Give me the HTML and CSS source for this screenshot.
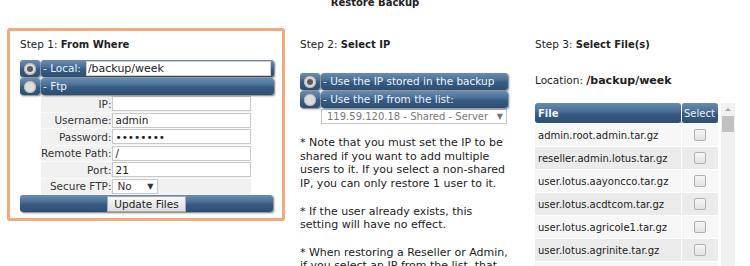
FILE: index.html
```html
<!DOCTYPE html>
<html lang="en">
<head>
<meta charset="UTF-8">
<title>Restore Backup</title>
<link rel="stylesheet" href="styles.css">
</head>
<body>

<h1 class="page-title">Restore Backup</h1>

<div class="restore">
    <!-- Step 1 -->
    <div class="step step-one">
        <h2 class="step-title">Step 1: <b>From Where</b></h2>

        <div class="radio-row">
            <span class="radio-cell"><span class="radio checked"></span></span>
            <span class="bar">- Local: <input class="local-path" type="text" value="/backup/week"></span>
        </div>
        <div class="radio-row">
            <span class="radio-cell"><span class="radio"></span></span>
            <span class="bar">- Ftp</span>
        </div>

        <table class="ftp-fields">
            <tr><td class="label">IP:</td><td><input type="text" value=""></td></tr>
            <tr><td class="label">Username:</td><td><input type="text" value="admin"></td></tr>
            <tr><td class="label">Password:</td><td><input type="password" value="password"></td></tr>
            <tr><td class="label">Remote Path:</td><td><input type="text" value="/"></td></tr>
            <tr><td class="label">Port:</td><td><input type="text" value="21"></td></tr>
            <tr><td class="label">Secure FTP:</td><td><span class="fake-select small">No <i>&#9660;</i></span></td></tr>
        </table>

        <div class="bar bar-center">
            <button class="btn" type="button">Update Files</button>
        </div>
    </div>

    <!-- Step 2 -->
    <div class="step step-two">
        <h2 class="step-title">Step 2: <b>Select IP</b></h2>

        <div class="ip-options">
            <div class="radio-row">
                <span class="radio-cell"><span class="radio checked"></span></span>
                <span class="bar">- Use the IP stored in the backup</span>
            </div>
            <div class="radio-row">
                <span class="radio-cell"><span class="radio"></span></span>
                <span class="bar">- Use the IP from the list:</span>
            </div>
            <span class="fake-select ip-select"><span>119.59.120.18 - Shared - Server</span> <i>&#9660;</i></span>
        </div>

        <p class="note">
            * Note that you must set the IP to be shared if you want to add multiple users to it. If you select a non-shared IP, you can only restore 1 user to it.<br><br>
            * If the user already exists, this setting will have no effect.<br><br>
            * When restoring a Reseller or Admin, if you select an IP from the list, that IP will be used for all of its users.
        </p>
    </div>

    <!-- Step 3 -->
    <div class="step step-three">
        <h2 class="step-title">Step 3: <b>Select File(s)</b></h2>

        <p class="location">Location: <b>/backup/week</b></p>

        <div class="file-scroll">
            <div class="file-list">
                <table class="files">
                    <thead>
                        <tr><th class="col-file">File</th><th class="col-select">Select</th></tr>
                    </thead>
                    <tbody>
                        <tr><td>admin.root.admin.tar.gz</td><td class="check"><input type="checkbox"></td></tr>
                        <tr><td>reseller.admin.lotus.tar.gz</td><td class="check"><input type="checkbox"></td></tr>
                        <tr><td>user.lotus.aayoncco.tar.gz</td><td class="check"><input type="checkbox"></td></tr>
                        <tr><td>user.lotus.acdtcom.tar.gz</td><td class="check"><input type="checkbox"></td></tr>
                        <tr><td>user.lotus.agricole1.tar.gz</td><td class="check"><input type="checkbox"></td></tr>
                        <tr><td>user.lotus.agrinite.tar.gz</td><td class="check"><input type="checkbox"></td></tr>
                        <tr><td>user.lotus.anantara.tar.gz</td><td class="check"><input type="checkbox"></td></tr>
                        <tr><td>user.lotus.asiatech.tar.gz</td><td class="check"><input type="checkbox"></td></tr>
                    </tbody>
                </table>
            </div>
            <div class="scrollbar">
                <span class="scroll-arrow"></span>
                <span class="scroll-thumb"></span>
            </div>
        </div>
    </div>
</div>

</body>
</html>
```

FILE: styles.css
```css
/* base */
body {
    margin: 0;
    font-family: "DejaVu Sans", Verdana, sans-serif;
    font-size: 10.5px;
    color: #222;
    background: #fff;
}

.page-title {
    margin: -4px 0 0;
    font-size: 10px;
    line-height: 14px;
    text-align: center;
}

.restore {
    display: flex;
    align-items: flex-start;
    margin-top: 18px;
    padding-left: 7px;
}

.step-title {
    margin: 0;
    font-size: 10.5px;
    font-weight: normal;
    line-height: 14px;
}
.step-title b {
    font-size: 10px;
}

/* step 1 box */
.step-one {
    width: 278px;
    border: 3px solid #f3a97b;
    border-radius: 3px;
    padding: 6px 0 6px 10px;
    box-sizing: border-box;
}
.step-one .step-title {
    margin-bottom: 8px;
}

/* blue bars + radios */
.radio-row {
    display: flex;
    height: 17px;
    margin-bottom: 1px;
    width: 254px;
}
.bar,
.radio-cell {
    background: linear-gradient(#6a8cb0 0%, #4b7098 40%, #365c84 55%, #2c4e73 100%);
    border-radius: 3px;
    box-shadow: 1px 1px 2px rgba(0, 0, 0, 0.55);
    color: #eef3f8;
}
.radio-cell {
    width: 20px;
    display: flex;
    align-items: center;
    justify-content: center;
    flex: none;
}
.bar {
    flex: 1;
    margin-left: 1px;
    display: flex;
    align-items: center;
    padding-left: 2px;
    line-height: 17px;
    white-space: nowrap;
}
.radio {
    width: 12px;
    height: 12px;
    border-radius: 50%;
    background: #dcdcdc;
    box-shadow: inset 0 0 0 1px #b4b4b4;
    display: flex;
    align-items: center;
    justify-content: center;
}
.radio.checked::after {
    content: "";
    width: 6px;
    height: 6px;
    border-radius: 50%;
    background: #5a5a5a;
}
.local-path {
    flex: 1;
    min-width: 0;
    margin: 0 3px 0 5px;
    height: 15px;
    box-sizing: border-box;
    border: 1px solid #ccc;
    padding: 0 1px;
    font-family: "DejaVu Sans", Verdana, sans-serif;
    font-size: 11px;
    color: #222;
}

/* ftp fields */
.ftp-fields {
    border-collapse: collapse;
    margin-left: 21px;
    width: 210px;
    background: #f1f1f1;
}
.ftp-fields td {
    padding: 0;
    height: 15.5px;
    border-bottom: 1px solid #fafafa;
}
.ftp-fields .label {
    width: 66px;
    text-align: right;
    padding-right: 1px;
    color: #333;
    white-space: nowrap;
}
.ftp-fields input {
    display: block;
    width: 139px;
    height: 15px;
    box-sizing: border-box;
    border: 1px solid #c8c8c8;
    padding: 0 2px;
    font-family: "DejaVu Sans", Verdana, sans-serif;
    font-size: 10.5px;
    color: #222;
}

.fake-select {
    display: flex;
    align-items: center;
    justify-content: space-between;
    height: 15px;
    box-sizing: border-box;
    border: 1px solid #c8c8c8;
    background: #fff;
    padding: 0 4px;
    color: #333;
    white-space: nowrap;
    overflow: hidden;
}
.fake-select i {
    font-style: normal;
    font-size: 8px;
    color: #333;
}
.fake-select.small {
    width: 46px;
    color: #4a1d3a;
}

.bar-center {
    width: 253px;
    height: 17px;
    margin: 0;
    justify-content: center;
    padding: 0;
}
.btn {
    height: 16px;
    padding: 0 6px;
    border: 1px solid #a8a8a8;
    background: linear-gradient(#f7f7f7, #dedede);
    font-family: "DejaVu Sans", Verdana, sans-serif;
    font-size: 10.5px;
    color: #222;
    line-height: 14px;
}

/* step 2 */
.step-two {
    width: 210px;
    margin-left: 15px;
    padding-top: 9px;
}
.ip-options {
    margin-top: 21px;
}
.ip-options .radio-row {
    width: 208px;
}
.ip-select {
    margin-left: 21px;
    width: 186px;
    padding: 0 3px 0 5px;
    font-size: 10px;
    color: #777;
}
.ip-select i {
    color: #777;
}
.note {
    margin: 12px 0 0;
    font-size: 11px;
    line-height: 13.7px;
    color: #222;
}

/* step 3 */
.step-three {
    width: 200px;
    margin-left: 25px;
    padding-top: 9px;
}
.location {
    margin: 21px 0 0;
    line-height: 14px;
}
.location b {
    font-size: 11px;
}
.file-scroll {
    display: flex;
    margin-top: 15px;
    height: 170px;
}
.file-list {
    width: 183px;
    overflow: hidden;
}
.files {
    border-collapse: separate;
    border-spacing: 0;
    width: 183px;
    table-layout: fixed;
    font-size: 10px;
}
.files th {
    height: 20px;
    padding: 0 3px;
    text-align: left;
    color: #eef3f8;
    background: linear-gradient(#6a8cb0 0%, #4b7098 40%, #365c84 55%, #2c4e73 100%);
    border-radius: 3px;
    box-shadow: 1px 1px 2px rgba(0, 0, 0, 0.55);
}
.files .col-select {
    width: 37px;
    padding: 0 2px;
    font-weight: normal;
    border-left: 1px solid #fff;
    box-sizing: border-box;
}
.files td {
    height: 22px;
    padding: 0 3px;
    border-top: 1px solid #fff;
    background: #f7f7f7;
    white-space: nowrap;
    overflow: hidden;
    color: #222;
}
.files tbody tr:nth-child(even) td {
    background: #ebebeb;
}
.files td.check {
    border-left: 1px solid #fff;
    text-align: center;
}
.files input[type="checkbox"] {
    appearance: none;
    margin: 0;
    width: 12px;
    height: 12px;
    border: 1px solid #b0b0b0;
    border-radius: 2px;
    background: linear-gradient(#f6f6f6, #e2e2e2);
    vertical-align: middle;
}

/* fake scrollbar */
.scrollbar {
    width: 14px;
    margin-left: 3px;
    background: #f1f1f1;
    display: flex;
    flex-direction: column;
    align-items: center;
}
.scroll-arrow {
    margin-top: 5px;
    width: 0;
    height: 0;
    border-left: 3px solid transparent;
    border-right: 3px solid transparent;
    border-bottom: 3px solid #a3a3a3;
}
.scroll-thumb {
    margin-top: 5px;
    width: 12px;
    height: 16px;
    background: #c1c1c1;
}
```
